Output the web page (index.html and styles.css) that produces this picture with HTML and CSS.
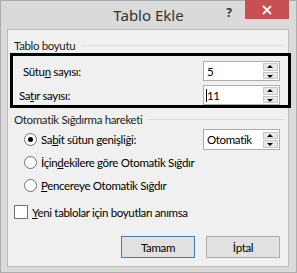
FILE: index.html
```html
<!DOCTYPE html>
<html lang="tr">
<head>
  <meta charset="UTF-8" />
  <title>Tablo Ekle</title>
  <link rel="stylesheet" href="styles.css">
</head>
<body>
  <div class="window">
    <div class="titlebar">
      <span></span>
      <span class="title">Tablo Ekle</span>
      <div class="controls">
        <span class="help">?</span>
        <span class="close">
          <svg width="10" height="10" viewBox="0 0 10 10"><path d="M1 1L9 9M9 1L1 9" stroke="#fff" stroke-width="1.8"/></svg>
        </span>
      </div>
    </div>

    <div class="content">
      <div class="group-head"><span>Tablo boyutu</span><i></i></div>

      <div class="size-box">
        <div class="row">
          <span class="lbl lbl-a">Sütu<u>n</u> sayısı:</span>
          <div class="spin"><span class="val">5</span><div class="arrows"><b class="up"></b><b class="down"></b></div></div>
        </div>
        <div class="row">
          <span class="lbl">Sa<u>t</u>ır sayısı:</span>
          <div class="spin"><span class="val caret">11</span><div class="arrows"><b class="up"></b><b class="down"></b></div></div>
        </div>
      </div>

      <div class="group-head second"><span>Otomatik Sığdırma hareketi</span><i></i></div>

      <div class="options">
        <div class="opt">
          <span class="radio on"></span>
          <span class="opt-text">Sa<u>b</u>it sütun genişliği:</span>
          <div class="spin combo"><span class="val">Otomatik</span><div class="arrows"><b class="up"></b><b class="down"></b></div></div>
        </div>
        <div class="opt">
          <span class="radio"></span>
          <span class="opt-text">İçin<u>d</u>ekilere göre Otomatik Sığdır</span>
        </div>
        <div class="opt">
          <span class="radio"></span>
          <span class="opt-text"><u>P</u>encereye Otomatik Sığdır</span>
        </div>
      </div>

      <div class="check-row">
        <span class="checkbox"></span>
        <span><u>Y</u>eni tablolar için boyutları anımsa</span>
      </div>

      <div class="buttons">
        <button class="btn default">Tamam</button>
        <button class="btn">İptal</button>
      </div>
    </div>
  </div>
</body>
</html>
```

FILE: styles.css
```css
body {
  margin: 0;
  font-family: Lato, "Noto Sans", Arial, sans-serif;
  font-size: 11.5px;
  letter-spacing: -0.35px;
  color: #000;
}
.window {
  width: 297px;
  height: 273px;
  box-sizing: border-box;
  background-color: #dadada;
  border: 1px solid #acacac;
  display: flex;
  flex-direction: column;
}
.titlebar {
  height: 28px;
  display: grid;
  grid-template-columns: 1fr auto 1fr;
  align-items: start;
  letter-spacing: 0;
}
.title {
  font-family: "Noto Sans", Arial, sans-serif;
  font-size: 15px;
  color: #333;
  margin-top: 4px;
}
.controls {
  display: flex;
  justify-content: flex-end;
  margin-right: 7px;
}
.help {
  font-family: "Noto Sans", Arial, sans-serif;
  font-weight: bold;
  font-size: 12px;
  color: #333;
  margin-top: 3px;
  margin-right: 13px;
}
.close {
  width: 44px;
  height: 19px;
  margin-top: -1px;
  background-color: #c75050;
  display: flex;
  align-items: center;
  justify-content: center;
}
.content {
  flex: 1;
  margin: 0 7px 5px 6px;
  background-color: #f0f0f0;
  border: 1px solid #bcbcbc;
  padding: 8px 0 0 2px;
}
.group-head {
  display: flex;
  align-items: center;
  padding-left: 4px;
  height: 14px;
  color: #1e1e1e;
}
.group-head i {
  flex: 1;
  height: 1px;
  background-color: #dcdcdc;
  margin: 0 4px 0 6px;
}
.group-head.second {
  margin-top: 4px;
}
.size-box {
  border: 3px solid #000;
  margin-top: 1px;
  margin-right: -3px;
  padding: 3px 8px 0 6px;
  height: 46px;
}
.row {
  display: flex;
  align-items: center;
  justify-content: space-between;
  height: 24px;
}
.lbl-a {
  padding-left: 4px;
}
.spin {
  width: 75px;
  height: 18px;
  background-color: #fff;
  border: 1px solid #abadb3;
  display: flex;
  align-items: center;
}
.val {
  flex: 1;
  padding-left: 3px;
}
.caret {
  border-left: 1px solid #000;
  margin-left: 2px;
  padding-left: 0;
}
.arrows {
  width: 15px;
  height: 16px;
  margin-right: 1px;
  display: flex;
  flex-direction: column;
  gap: 1px;
}
.arrows b {
  flex: 1;
  background-color: #e8e8e8;
  border: 1px solid #c7c7c7;
  position: relative;
}
.arrows b::after {
  content: "";
  position: absolute;
  left: 3px;
  top: 1px;
  border-left: 3px solid transparent;
  border-right: 3px solid transparent;
}
.arrows .up::after {
  border-bottom: 3px solid #000;
}
.arrows .down::after {
  border-top: 3px solid #000;
  top: 2px;
}
.options {
  padding: 2px 8px 0 14px;
}
.opt {
  display: flex;
  align-items: center;
  height: 23px;
}
.opt-text {
  flex: 1;
  margin-left: 4px;
}
.combo {
  height: 19px;
}
.radio {
  width: 11px;
  height: 11px;
  border: 1px solid #707070;
  border-radius: 50%;
  background-color: #fff;
  position: relative;
}
.radio.on::after {
  content: "";
  position: absolute;
  left: 3px;
  top: 3px;
  width: 5px;
  height: 5px;
  border-radius: 50%;
  background-color: #000;
}
.check-row {
  display: flex;
  align-items: center;
  margin-top: 8px;
  padding-left: 4px;
}
.checkbox {
  width: 12px;
  height: 12px;
  border: 1px solid #707070;
  background-color: #fff;
  margin-right: 4px;
}
.buttons {
  display: flex;
  justify-content: flex-end;
  gap: 11px;
  margin-top: 17px;
  padding-right: 8px;
}
.btn {
  width: 74px;
  height: 22px;
  font-family: Lato, "Noto Sans", Arial, sans-serif;
  font-size: 11.5px;
  letter-spacing: -0.35px;
  background-color: #e1e1e1;
  border: 1px solid #adadad;
  padding: 0;
}
.btn.default {
  border-color: #3c7fb1;
}
```
